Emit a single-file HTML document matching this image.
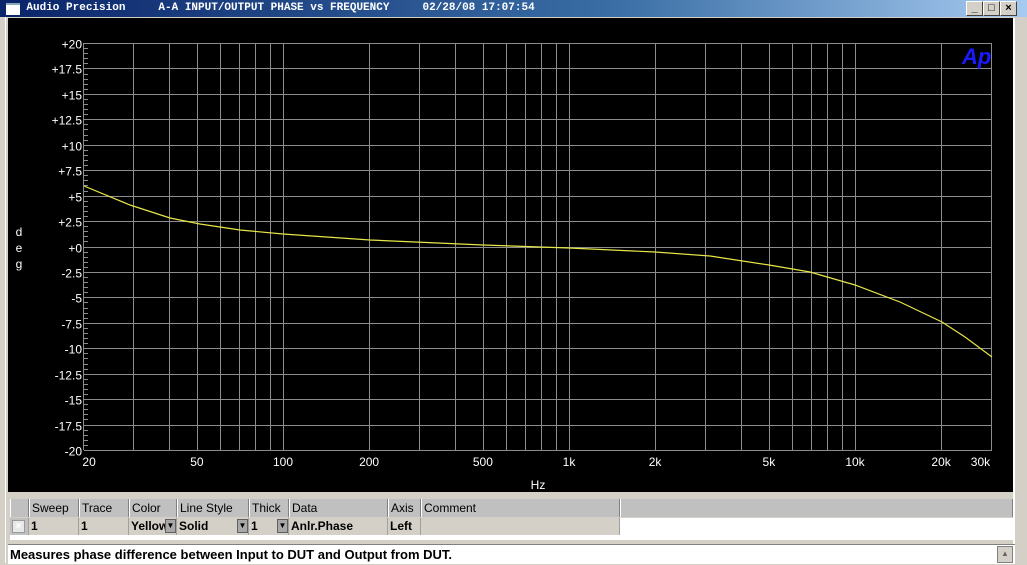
<!DOCTYPE html>
<html><head><meta charset="utf-8"><style>
body{margin:0;width:1027px;height:563px;overflow:hidden;background:#d4d0c8;font-family:"Liberation Sans",sans-serif;position:relative}
#title{position:absolute;left:0;top:0;width:1027px;height:17px;background:linear-gradient(90deg,#0a246a,#3a6ea5 60%,#a6caf0);color:#fff;font:bold 11px "Liberation Mono",monospace;white-space:pre;line-height:17px}
#title .ic{position:absolute;left:6px;top:3px;width:14px;height:10px;background:#fff;border-top:2px solid #8ab}
.btn{position:absolute;top:1px;width:15px;height:13px;background:#d4d0c8;border:1px solid;border-color:#fff #404040 #404040 #fff;color:#000;font:bold 11px "Liberation Sans",sans-serif;text-align:center;line-height:13px}
#plot{position:absolute;left:8px;top:18px;width:1005px;height:474px;background:#000}
.h{position:absolute;top:499px;height:18px;background:#c0c0c0;border-right:1px solid #808080;border-left:1px solid #fff;box-sizing:border-box;padding-left:2px;font-size:12px;line-height:18px}
.d{position:absolute;top:518px;height:17px;background:#d4d0c8;border-right:1px solid #a0a0a0;box-sizing:border-box;padding-left:2px;font-size:12px;font-weight:bold;line-height:17px;overflow:hidden;white-space:nowrap}
.dd{position:absolute;top:1px;right:0;width:11px;height:14px;background:#a8a8a8;border:1px solid #606060;box-sizing:border-box;font-size:8px;line-height:12px;text-align:center}
</style></head><body>
<div id="title"><span class="ic"></span>    Audio Precision     A-A INPUT/OUTPUT PHASE vs FREQUENCY     02/28/08 17:07:54</div>
<div class="btn" style="left:966px">_</div><div class="btn" style="left:983px">□</div><div class="btn" style="left:1000px">×</div>
<div style="position:absolute;left:5px;top:17px;width:1px;height:546px;background:#fff"></div>
<div style="position:absolute;left:1013px;top:18px;width:2px;height:526px;background:#fff"></div>
<div id="plot"></div>
<svg id="sv" width="1027" height="563" style="position:absolute;left:0;top:0"></svg>
<div class="h" style="left:10px;width:19px"></div>
<div class="h" style="left:29px;width:50px">Sweep</div>
<div class="h" style="left:79px;width:50px">Trace</div>
<div class="h" style="left:129px;width:48px">Color</div>
<div class="h" style="left:177px;width:72px">Line Style</div>
<div class="h" style="left:249px;width:40px">Thick</div>
<div class="h" style="left:289px;width:99px">Data</div>
<div class="h" style="left:388px;width:33px">Axis</div>
<div class="h" style="left:421px;width:199px">Comment</div>
<div class="h" style="left:620px;width:393px"></div>
<div style="position:absolute;left:10px;top:518px;width:1003px;height:22px;background:#fff"></div>
<div class="d" style="left:10px;width:19px;background:#c0c0c0"><span style="display:block;width:11px;height:11px;margin-top:2px;background:#e8e8e8;color:#fff;font-size:10px;line-height:11px;text-align:center;border:1px solid #999">×</span></div>
<div class="d" style="left:29px;width:50px">1</div>
<div class="d" style="left:79px;width:50px">1</div>
<div class="d" style="left:129px;width:48px">Yellow<span class="dd">▼</span></div>
<div class="d" style="left:177px;width:72px">Solid<span class="dd">▼</span></div>
<div class="d" style="left:249px;width:40px">1<span class="dd">▼</span></div>
<div class="d" style="left:289px;width:99px">Anlr.Phase</div>
<div class="d" style="left:388px;width:33px">Left</div>
<div class="d" style="left:421px;width:199px"></div>
<div style="position:absolute;left:8px;top:544px;width:1005px;height:19px;background:#fff;border-top:1px solid #808080;font-size:13px;font-weight:bold;line-height:20px;padding-left:2px">Measures phase difference between Input to DUT and Output from DUT.</div>
<div style="position:absolute;left:997px;top:546px;width:14px;height:15px;background:#d4d0c8;border:1px solid #808080;font-size:8px;text-align:center;color:#666;line-height:14px">▲</div>
<script>
var s='',x0=569,dec=286,yT=43,yB=450,gc="#8c8c8c";
function X(f){return x0+dec*Math.log10(f/1000);}
var fs=[];for(var d=10;d<=10000;d*=10)for(var m=1;m<10;m++){var f=d*m;if(f>=20&&f<=30000)fs.push(f);}fs.push(30000);
fs.forEach(function(f){var x=Math.round(X(f))+.5;s+='<line x1="'+x+'" y1="'+yT+'" x2="'+x+'" y2="'+yB+'" stroke="'+gc+'" stroke-width="1"/>';});
for(var i=0;i<=16;i++){var y=Math.round(yT+i*(yB-yT)/16)+.5;s+='<line x1="84" y1="'+y+'" x2="992" y2="'+y+'" stroke="'+gc+'"/>';
var v=20-i*2.5;var t=(v>=0?'+':'')+(v%1?v.toFixed(1):v);s+='<text x="82" y="'+(y+5)+'" fill="#fff" font-size="12" text-anchor="end" font-family="Liberation Sans">'+t+'</text>';}
for(var i=0;i<=80;i++){var y=Math.round(yT+i*(yB-yT)/80)+.5;s+='<line x1="84" y1="'+y+'" x2="'+(i%5?88:89)+'" y2="'+y+'" stroke="'+gc+'"/>';}
var lb=[[20,'20'],[50,'50'],[100,'100'],[200,'200'],[500,'500'],[1000,'1k'],[2000,'2k'],[5000,'5k'],[10000,'10k'],[20000,'20k'],[30000,'30k']];
lb.forEach(function(l){var x=X(l[0]);if(l[0]==20)x+=6;if(l[0]==30000)x-=11;s+='<text x="'+x+'" y="466" fill="#fff" font-size="12" text-anchor="middle" font-family="Liberation Sans">'+l[1]+'</text>';});
s+='<text x="538" y="489" fill="#fff" font-size="12" text-anchor="middle" font-family="Liberation Sans">Hz</text>';
['d','e','g'].forEach(function(c,i){s+='<text x="19" y="'+(236+i*16)+'" fill="#fff" font-size="12" text-anchor="middle" font-family="Liberation Sans">'+c+'</text>';});
s+='<text x="962" y="64" fill="#1a1aff" font-size="22" font-weight="bold" font-style="italic" font-family="Liberation Sans">Ap</text>';
s+='<polyline fill="none" stroke="#e6e64a" stroke-width="1.2" points="84,186 130,205 170,218 200,224 240,230 283,234 370,240 483,245 569,248 655,252 710,256 769,265 810,272 855,285 900,302 942,322 965,337 992,357"/>';
document.getElementById('sv').innerHTML=s;
</script>
</body></html>
